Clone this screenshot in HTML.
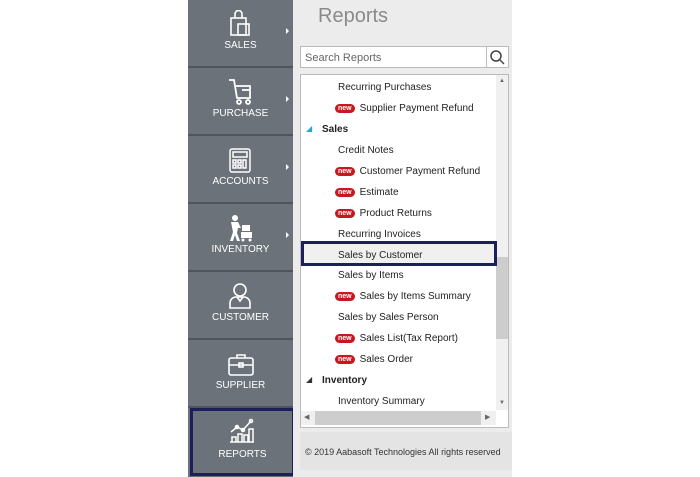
<!DOCTYPE html>
<html><head><style>
body{margin:0;width:700px;height:477px;background:#fff;position:relative;overflow:hidden;font-family:"Liberation Sans",sans-serif}
.sb{position:absolute;left:188px;top:0;width:105px;height:477px;background:#6c7279}
.it{position:absolute;left:0;width:105px;height:66px;border-bottom:2px solid #50555b;color:#fff;font-size:10px;text-align:center}
.it .lb{position:absolute;left:0;right:0;top:40px}
.it svg{position:absolute;left:40px;top:10px}
.ar{position:absolute;right:4px;top:28px;width:0;height:0;border-left:3px solid #fff;border-top:3px solid transparent;border-bottom:3px solid transparent}
.rp{position:absolute;left:293px;top:0;width:219px;height:477px;background:#ececec}
.row{position:absolute;font-size:10px;color:#222;white-space:nowrap}
.nw{display:inline-block;background:#c8171e;color:#fff;font-size:7px;font-weight:bold;border-radius:5px;padding:0 3px;line-height:9px;margin-right:5px;vertical-align:1px}
</style></head><body>
<div class="sb">
 <div class="it" style="top:0;height:66px"><svg width="24" height="28" viewBox="0 0 24 28" fill="none" stroke="#fff" stroke-width="1.6"><rect x="3" y="8" width="15" height="17"/><path d="M7 8V4a3.5 3.5 0 0 1 7 0v4"/><rect x="10" y="14" width="11" height="11"/></svg><div class="lb">SALES</div><div class="ar"></div></div>
 <div class="it" style="top:68px"><svg width="26" height="28" viewBox="0 0 26 28" fill="none" stroke="#fff" stroke-width="1.8"><path d="M1 2h5l3 18h13V8H8"/><path d="M14 12h8"/><circle cx="11" cy="24" r="2"/><circle cx="20" cy="24" r="2"/></svg><div class="lb">PURCHASE</div><div class="ar"></div></div>
 <div class="it" style="top:136px"><svg width="24" height="28" viewBox="0 0 24 28" fill="none" stroke="#fff" stroke-width="1.5"><rect x="2" y="3" width="20" height="23" rx="2"/><rect x="5" y="6" width="14" height="5"/><path d="M5 14h3v3H5zM10 14h3v3h-3zM5 19h3v3H5zM10 19h3v3h-3zM15 14h3v8h-3z"/></svg><div class="lb">ACCOUNTS</div><div class="ar"></div></div>
 <div class="it" style="top:204px"><svg width="26" height="28" viewBox="0 0 26 28" fill="#fff"><circle cx="7" cy="4" r="3"/><path d="M3 8h7l3 6h-3l-1 5 3 8h-3l-2-6-2 6H2l3-9z"/><rect x="14" y="11" width="8" height="6"/><rect x="13" y="18" width="11" height="6"/><circle cx="15" cy="26" r="1.5"/><circle cx="22" cy="26" r="1.5"/></svg><div class="lb">INVENTORY</div><div class="ar"></div></div>
 <div class="it" style="top:272px"><svg width="24" height="28" viewBox="0 0 24 28" fill="none" stroke="#fff" stroke-width="1.6"><circle cx="12" cy="8" r="6"/><path d="M2 26v-5a6 6 0 0 1 6-6h8a6 6 0 0 1 6 6v5z"/><path d="M9 15l3 4 3-4"/></svg><div class="lb">CUSTOMER</div></div>
 <div class="it" style="top:340px"><svg width="26" height="28" viewBox="0 0 26 28" fill="none" stroke="#fff" stroke-width="1.6"><rect x="1" y="8" width="24" height="17" rx="2"/><path d="M9 8V5h8v3M1 15h24"/><rect x="11" y="13" width="4" height="4"/></svg><div class="lb">SUPPLIER</div></div>
 <div style="position:absolute;left:2px;top:408px;width:99px;height:62px;border:3px solid #1d1f5c;background:#6c7279;color:#fff;font-size:10px;text-align:center"><svg style="position:absolute;left:36px;top:6px" width="26" height="26" viewBox="0 0 26 26" fill="none" stroke="#fff" stroke-width="1.5"><path d="M2 15l6-5 6 3 8-9"/><circle cx="8" cy="10" r="1.5"/><circle cx="14" cy="13" r="1.5"/><circle cx="22" cy="4" r="1.5"/><path d="M3 25v-5h4v5M9 25v-8h4v8M15 25v-7h4v7M20 25v-13h4v13M1 25h24"/></svg><div style="position:absolute;left:0;right:0;top:38px">REPORTS</div></div>
</div>
<div class="rp">
 <div style="position:absolute;left:25px;top:5px;font-size:20px;color:#8a8a8a">Reports</div>
 <div style="position:absolute;left:7px;top:46px;width:181px;height:20px;background:#fff;border:1px solid #bbb;font-size:11px;color:#666;line-height:22px;padding-left:4px">Search Reports</div>
 <div style="position:absolute;left:193px;top:46px;width:21px;height:20px;background:#fff;border:1px solid #bbb"><svg width="21" height="20" viewBox="0 0 21 20" fill="none" stroke="#444" stroke-width="1.5"><circle cx="9" cy="9" r="5"/><path d="M13 13l4 4"/></svg></div>
 <div style="position:absolute;left:7px;top:74px;width:207px;height:352px;background:#fff;border:1px solid #bbb"></div>
 <div style="position:absolute;left:203px;top:75px;width:12px;height:335px;background:#f0f0f0"></div>
 <div style="position:absolute;left:203px;top:257px;width:12px;height:82px;background:#cdcdcd"></div>
 <div style="position:absolute;left:206px;top:78px;font-size:6px;color:#666">▲</div>
 <div style="position:absolute;left:206px;top:400px;font-size:6px;color:#666">▼</div>
 <div style="position:absolute;left:8px;top:411px;width:195px;height:14px;background:#f0f0f0"></div>
 <div style="position:absolute;left:22px;top:411px;width:166px;height:14px;background:#cdcdcd"></div>
 <div style="position:absolute;left:11px;top:413px;font-size:7px;color:#666">◀</div>
 <div style="position:absolute;left:192px;top:413px;font-size:7px;color:#666">▶</div>
 <div style="position:absolute;left:7px;top:432px;width:207px;height:38px;background:#e4e4e4;font-size:9px;color:#333;line-height:40px;padding-left:5px">© 2019 Aabasoft Technologies All rights reserved</div>
</div>
<div style="position:absolute;left:301px;top:241px;width:190px;height:19px;border:3px solid #1d1f5c;background:#f0f0f0"></div>
<div class="row" style="left:338px;top:82px">Recurring Purchases</div>
<div class="row" style="left:335px;top:103px"><span class="nw">new</span>Supplier Payment Refund</div>
<div class="row" style="left:306px;top:124px;color:#29a6d6;font-size:8px">◢</div>
<div class="row" style="left:322px;top:124px;font-weight:bold">Sales</div>
<div class="row" style="left:338px;top:145px">Credit Notes</div>
<div class="row" style="left:335px;top:166px"><span class="nw">new</span>Customer Payment Refund</div>
<div class="row" style="left:335px;top:187px"><span class="nw">new</span>Estimate</div>
<div class="row" style="left:335px;top:208px"><span class="nw">new</span>Product Returns</div>
<div class="row" style="left:338px;top:229px">Recurring Invoices</div>
<div class="row" style="left:338px;top:250px">Sales by Customer</div>
<div class="row" style="left:338px;top:270px">Sales by Items</div>
<div class="row" style="left:335px;top:291px"><span class="nw">new</span>Sales by Items Summary</div>
<div class="row" style="left:338px;top:312px">Sales by Sales Person</div>
<div class="row" style="left:335px;top:333px"><span class="nw">new</span>Sales List(Tax Report)</div>
<div class="row" style="left:335px;top:354px"><span class="nw">new</span>Sales Order</div>
<div class="row" style="left:306px;top:375px;color:#333;font-size:8px">◢</div>
<div class="row" style="left:322px;top:375px;font-weight:bold">Inventory</div>
<div class="row" style="left:338px;top:396px">Inventory Summary</div>
</body></html>
